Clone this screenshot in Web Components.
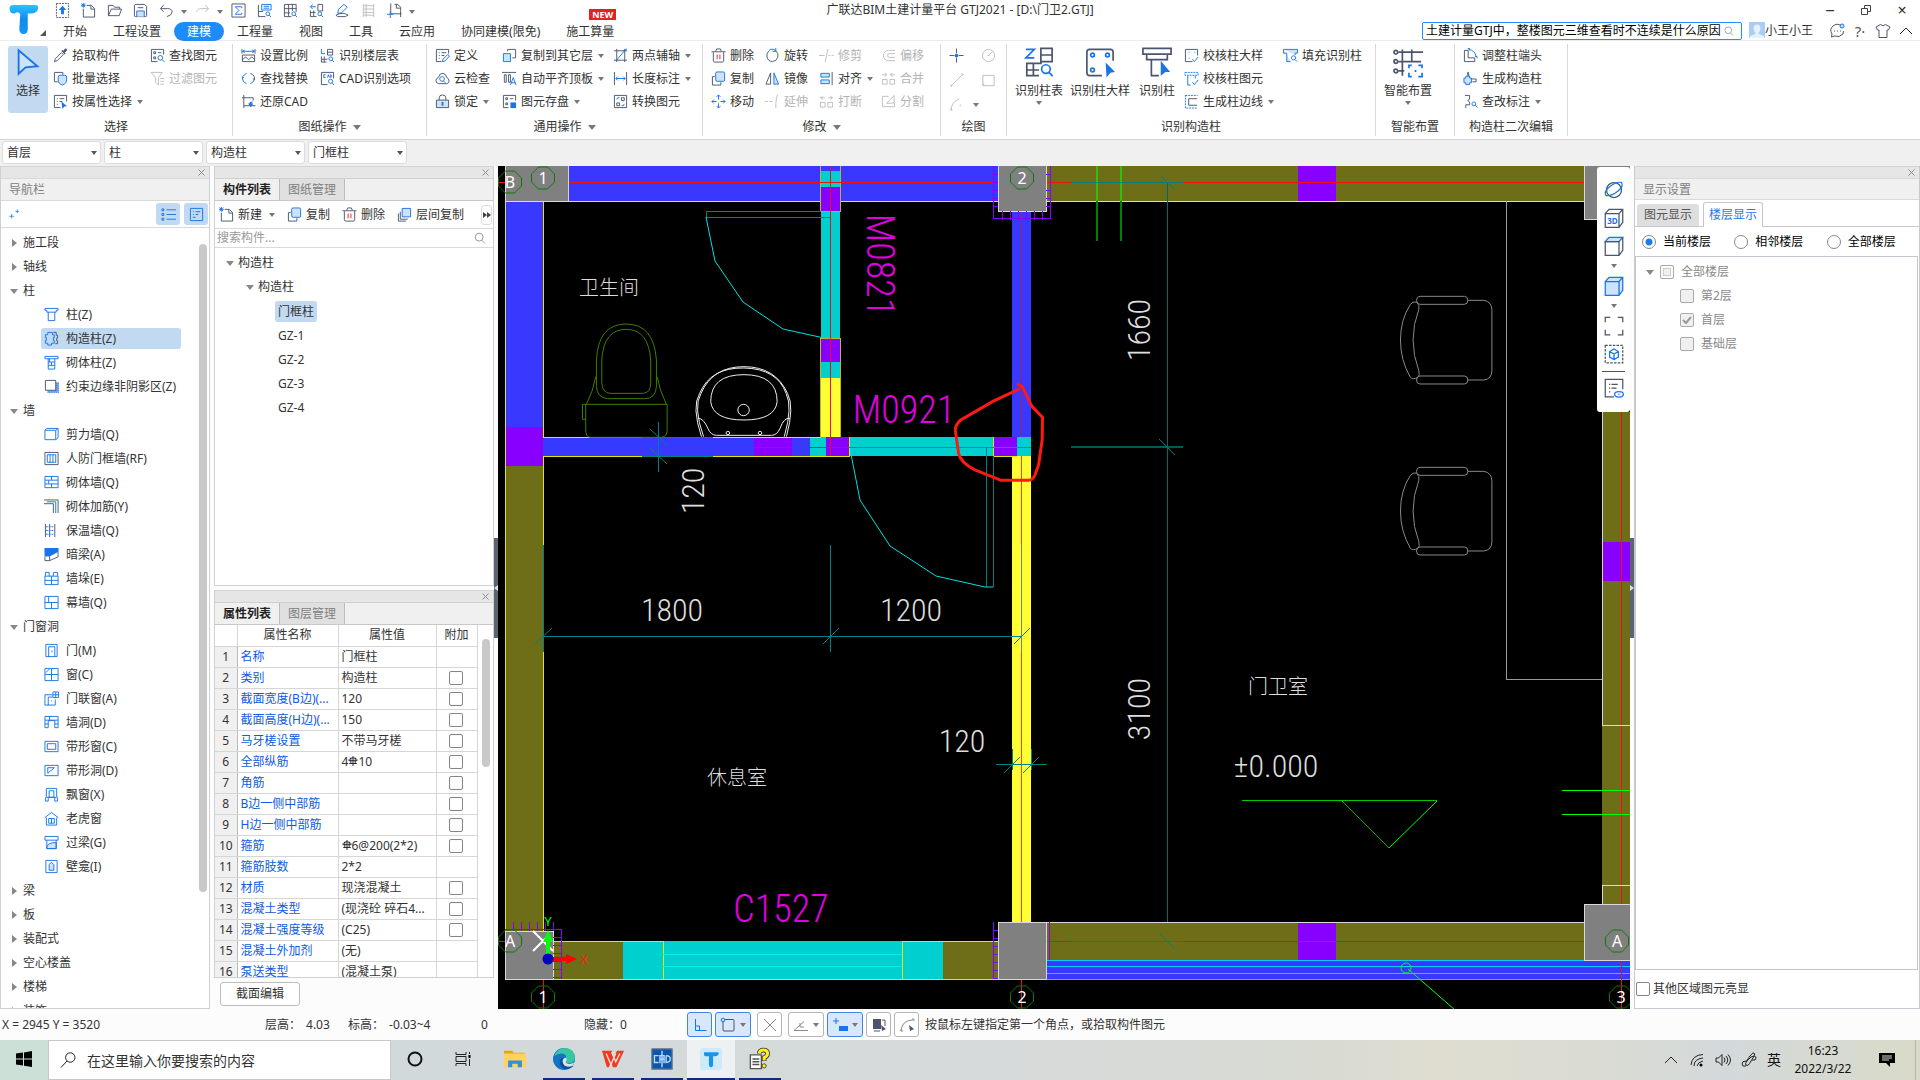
<!DOCTYPE html>
<html lang="zh-CN">
<head>
<meta charset="utf-8">
<title>广联达BIM土建计量平台 GTJ2021</title>
<style>
html,body{margin:0;height:100%}
body{font:12px/18px "Noto Sans","Noto Sans CJK SC",sans-serif;color:#333;background:#fcfcfc;overflow:hidden}
</style>
</head>
<body>
<gtj-app></gtj-app>
<script>
const BASE = `*{box-sizing:border-box}
button,input,select{font:inherit;color:inherit;margin:0}
button{background:none;border:0;padding:0;white-space:nowrap}
a{color:inherit;text-decoration:none}
input[type=checkbox]{appearance:none;width:14px;height:14px;border:1px solid #858585;border-radius:2px;background:#fff;display:block;flex:none}
.strip{height:12px;background:#e6e6e6;border-top:1px solid #d4d4d4;display:flex;justify-content:flex-end;align-items:center;padding-right:3px}
.strip button{width:9px;height:9px;display:block}.strip svg{display:block}
.caret{width:0;height:0;border:3px solid transparent;border-top:4px solid #777;border-bottom:0;flex:none}
`;
const STRIP = '<div class="strip"><button aria-label="关闭"><svg width="9" height="9" stroke="#8a8a8a" fill="none"><path d="M1.500 1.500l6 6m0-6l-6 6"/></svg></button></div>';
const define = (name, css, html, setup) => customElements.define(name, class extends HTMLElement {
  connectedCallback() {
    if (this.shadowRoot) return;
    const root = this.attachShadow({mode: 'open'});
    root.innerHTML = `<style>${BASE}${css}</style>` + (typeof html === 'function' ? html(this) : html);
    if (setup) setup(root, this);
  }
});

/* ---------- icons ---------- */
const p = (c, d) => `<path class="${c}" d="${d}"/>`;
const ICONS = {
  up: p('d dash', 'M1.500 .5h13v15h-13z') + p('B', 'M8 3l4 4.500H9.500V12h-3V7.500H4z'),
  newdoc: p('d', 'M6 2.500h5l3.500 3.500v9h-12V6M10.500 2.500V6.500h4') + p('b', 'M.5.500l4 4m0-4l-4 4M2.500 0v5M0 2.500h5'),
  open: p('d', 'M1.500 13.500v-11h5l1.500 2h5.500v2M1.500 13.500l3-7h11l-2.500 7z'),
  save: p('d', 'M1.500 3q0-1.500 1.500-1.500h9.500l2 2v10q0 1-1 1h-11q-1 0-1-1z') + p('bf', 'M4 14.500v-6h8v6') + p('d', 'M5 5h6'),
  undo: p('d', 'M5 2L1.500 6 5 9.500M2 6h7q5 0 5 3.500Q14 13 8.500 14.500'),
  redo: p('g', 'M11 2l3.500 4-3.500 3.500M14 6H7Q2 6 2 9.500'),
  sum: p('d', 'M1 1h14v14H1z') + p('b', 'M11.500 5.500V4h-7l4 4-4 4h7v-1.500'),
  kbd: p('b', 'M5 1.500h10v6H5zM7 3.500h6M7 5.500h6') + p('d', 'M1.500 2v12.500H9M1.500 9h5') + p('b', 'M13.500 11.500a2 2 0 1 1-4 0 2 2 0 0 1 4 0M13 13l2 2'),
  grid: p('d', 'M1.500 1.500h12.500v8M1.500 1.500V14.500H9M1.500 6h13M1.500 10.500h6M6 1.500v13M10 1.500v7') + p('b', 'M13.500 11.500a2 2 0 1 1-4 0 2 2 0 0 1 4 0M13 13l2 2'),
  plan: p('d', 'M9.500 1.500h5v7h-5zM1.500 8v6.500H8M5 8v6M1 10h6') + p('b', 'M1.500 4h6M4 1.500L1.500 4 4 6.500M13.500 11.500a2 2 0 1 1-4 0 2 2 0 0 1 4 0M13 13l2 2'),
  eraser: p('b', 'M9.500 1.500l3.500 3-6 6-4 .5.500-4z') + p('d', 'M1 13q7-4 13 0l-3 1.500H3z'),
  rail: p('g', 'M2.500 1v14M13.500 1v14M2.500 3h11M2.500 6.500h11M2.500 10h11M2.500 13h11M5.500 1v14'),
  crop: p('d', 'M4 .5v11h11.500M8 1.500h3.500l3 3V8M10 1.500v4h4.500M14.500 8v7') + p('b', 'M0 12h7M3.500 9v7'),
  arrow: p('bf', 'M3 1.500v12.500l3.700-3.400L13 10z'),
  pick: p('d', 'M1.500 14.500l1-3L9 5l2 2-6.500 6.500z') + p('D', 'M9 3l1-1 1 1 2-2.500q2-.5 2 2L12.500 5l1 1-1 1z'),
  multi: p('d', 'M5 11.500H1.500v-10h9V4') + p('bf', 'M5.500 6.500q0-2 2-2h5q2 0 2 2v3q0 4-4.500 5.500-4.500-1.500-4.500-5.500z'),
  prop: p('d', 'M14.500 8V1.500h-13v13H8M4 5h1M7 5h5M4 8h1M7 8h3M4 11h1') + p('B', 'M9 8l6 5-3 .3L10 16z'),
  find: p('d', 'M14.500 7V1.500h-13v13H8M4 4h2v2H4zM4 9.500h2v2H4zM8.500 5h3.500') + p('b', 'M13.500 10.500a2.500 2.500 0 1 1-5 0 2.500 2.500 0 0 1 5 0M13 12.500l2.500 2.500'),
  filter: p('g', 'M1 1.500h12L9 7v8L6 12V7zM11 8h4M11 11h4M11 14h4'),
  scale: p('b', 'M1 3.500h14M1 1v5M15 1v5M4 2L2 3.500 4 5M12 2l2 1.500L12 5') + p('d', 'M1.500 7.500h13v7h-13zM1.500 12.500L5 9.500l3 3 3.500-3 3 3'),
  swap: p('d', 'M10 2.500q5 2 4.500 7l-2-1.500') + p('b', 'M6 13.500q-5-2-4.500-7.500L3 7.500M6 2.500Q3 4 2 6M10 13.500q3-1 4-4'),
  restore: p('d', 'M3 1v11.500h12.500M1 4h12M13 4v3M3 15v-2.500') + p('B', 'M13 8q-4 0-4 2H7.500l3 4 2.500-4h-2z'),
  floors: p('b', 'M1.500 1v5h4') + p('d', 'M8 1.500h5.500v6H8zM8 4.500h5M1.500 9v6H7M4.500 9v6M1.500 12H8') + p('b', 'M13.500 11.500a2 2 0 1 1-4 0 2 2 0 0 1 4 0M13 13l2 2'),
  cad: p('d', 'M14.500 8V1.500h-13v13H8') + p('b', 'M6 4H4v3h2M8 7l1-3 1 3M11.500 4v3q2-1 0-3M13.500 11a2.200 2.200 0 1 1-4.400 0 2.200 2.200 0 0 1 4.400 0M13 13l2 2'),
  def: p('d', 'M14.500 6V1.500h-13v13H7M4 5h1M7 5h5M4 8h1M7 8h3M4 11h1') + p('b', 'M8 14.500l.5-2.500L13.500 7l2 1.500-5 5.500z'),
  cloud: p('d', 'M4 13.500Q.5 13 1 10q.5-2.500 2.500-3Q5 2 8.500 2.500 12 3 12.500 7 15 8 15 10.500 15 13 12.500 13.500z') + p('b', 'M10 8.500a2.500 2.500 0 1 1-5 0 2.500 2.500 0 0 1 5 0M9 10.500l2 2'),
  lock: p('d', 'M4.500 6.500V4q0-3 3.500-3t3.500 3v2.500') + '<path fill="#cfe2fb" stroke="#4b556b" d="M1.500 6.500h13v8h-13z"/>' + p('B', 'M7 8.500h2v4H7z'),
  copylay: p('d', 'M6 3.500V1.500h8.500v9H11') + p('bf', 'M1.500 6h5l2.500 0v8.500H1.500z'),
  align2: p('d', 'M0 1.500h15M2.500 4h2v8h-2zM7 4h2v8H7z') + p('b', 'M9 15l3-8 3 8M10 12.500h4'),
  disk: p('d', 'M14.500 7V1.500h-13v13H7M4 4h2v2H4zM4 9.500h2v2H4zM8.500 5h3.500') + p('B', 'M9 9h6v6H9z'),
  axis2: p('d', 'M4 1v14M12.500 1v14M1 3h14M1 13h14') + p('b', 'M3 14L13 2M11 2.500h3v-2'),
  dim: p('d', 'M1.500 1v14M14.500 1v14') + p('b', 'M3 8h10M5 6L3 8l2 2M11 6l2 2-2 2'),
  convert: p('d', 'M1.500 1.500h13v13h-13zM9 4h3v3H9zM4 9.500h3v3H4z') + p('b', 'M7 4H5l-1 2M9 12.500h2l1-2'),
  del: p('d', 'M2.500 4.500v9q0 1.500 1.500 1.500h8q1.500 0 1.500-1.500v-9M.5 4h15M5 3.500L6 1h4l1 2.500') + p('r', 'M6.500 7v5M9.500 7v5'),
  copy: p('d', 'M4 6H1.500v9h9v-3') + p('bf', 'M5 2.500q0-1.500 1.500-1.500H13q1.500 0 1.500 1.500v7q0 1.500-1.500 1.500H6.500Q5 11 5 9.500z'),
  move: p('b', 'M6 3l2-2 2 2M6 13l2 2 2-2M3 6L1 8l2 2M13 6l2 2-2 2M8 1v5M8 10v5M1 8h5M10 8h5'),
  rotate: p('d', 'M5 2.500a6.500 6.500 0 0 0 3 12M11.500 3a6.500 6.500 0 0 1-3.500 11.500') + p('b', 'M5 1.500q4-1 6.500 1.500M11.500 0v3.500H8'),
  mirror: p('d', 'M6 2v12H1z') + p('bf', 'M9.500 2v12h5z'),
  extend: p('g', 'M0 8h3M5 8h3M13.500 1q-2 3-2 14'),
  trim: p('g', 'M0 8h6M10 8h2M13.500 8h2M9.500 1l-3 14'),
  align: p('bf', 'M2 2.500h9v4H2zM2 9.500h9v4H2z') + p('d', 'M14 1v14'),
  brk: p('g', 'M1.500 9h5v5h-5zM9.500 9h5v5h-5zM1 4h5M10 4h5M4 2L2 4l2 2M12 2l2 2-2 2'),
  offset: p('g', 'M15 2.500H8a5.500 5.500 0 0 0 0 11h7M15 6H9a2 2 0 0 0 0 4h6'),
  merge: p('g', 'M1.500 9h5v5h-5zM9.500 9h5v5h-5zM1 4h5M10 4h5M4 2l2 2-2 2M12 2l-2 2 2 2'),
  split: p('g', 'M8 2.500H1.500v11h13V9M6 10L14 1.500v8z'),
  point: p('d', 'M8 .5v5M8 10.500v5M.5 8h5M10.500 8h5') + '<circle class="B" cx="8" cy="8" r="2"/>',
  circ: '<circle class="g" cx="8" cy="8" r="6.500"/>' + p('g', 'M8 8l4-4M7 8h2'),
  line: p('g', 'M2 14L14 2M1 13h2v2M13 1h2v2'),
  rect: p('g', 'M2 2.500h12v11H2zM1 12h2v2'),
  arc: p('g', 'M2 14Q3 5 11 2M1 13h2v2M12 8v2'),
  coltable: '<g stroke-width=".9">' + p('d', 'M9 .500h6v7H9zM9 4h6M1.500 8.500h8M1.500 8v7H8M5 8v7M1.500 12H8M9 8V4') + p('b', 'M1 1h4.500L1 5.500h4.500M14 11.500a2.300 2.300 0 1 1-4.600 0 2.300 2.300 0 0 1 4.600 0M13.300 13.300l2 2') + '</g>',
  colbig: '<g stroke-width=".9">' + p('d', 'M15 7V2.500Q15 1 13.500 1h-11Q1 1 1 2.500v11Q1 15 2.500 15H9') + p('b', 'M5 4a1 1 0 1 1-2 0 1 1 0 0 1 2 0M13 4a1 1 0 1 1-2 0 1 1 0 0 1 2 0M5 12a1 1 0 1 1-2 0 1 1 0 0 1 2 0') + p('B', 'M11 8l5 5-2.500.5L11.500 16z') + '</g>',
  colone: '<g stroke-width=".9">' + p('d', 'M.5.500h15v3h-2v3h-11v-3h-2zM3 3.500h10M5 6.500V15h4') + p('B', 'M10 7l5 6h-2.500L10 15z') + '</g>',
  chk1: p('d', 'M14.500 8V1.500h-13v13H9') + p('b', 'M5 4.500h1M11 4.500h1M5 11h1M9 12l2 2.500 4-5'),
  chk2: p('b dash', 'M1 1.500h14v3H1z') + p('b', 'M4 5v10h3M9 12l2 2.500 4-5M12 5v3'),
  edge: p('b dash', 'M1.500 1v14h13M1.500 1.500h13') + p('d', 'M14 5H5v7h9'),
  fillcol: p('bf', 'M.5 1.500h15v4H13v2M.5 1.500v4H4v9h4') + p('b', 'M13.500 10.500a2.200 2.200 0 1 1-4.400 0 2.200 2.200 0 0 1 4.400 0M13 12.500l2 2'),
  smart: '<g stroke-width=".9">' + p('d', 'M5 1v14M10 1v7M3 2.500h13M3 7.500h12M3 12.500h3M2.500 2.500a1 1 0 1 1-2 0 1 1 0 0 1 2 0M2.500 7.500a1 1 0 1 1-2 0 1 1 0 0 1 2 0M2.500 12.500a1 1 0 1 1-2 0 1 1 0 0 1 2 0') + p('b', 'M8.500 11v-1.500H10M13.500 9.500h2V11M15.500 13.500v2h-2M10 15.500H8.500v-2M12 12v1') + '</g>',
  endcol: p('d', 'M1.500 2.500v12h11v-4H5.500v-8z') + p('b', 'M6 1.500q7 1 8 8M5 .5h2v2M13 9h2v2'),
  gencol: p('bf', 'M3 5.500h4v2h2v5H7v2H3v-2H1v-5h2z') + p('d', 'M5 5V1.500l1 0v4M9 8.500h5v3h-4'),
  annot: p('d', 'M2 1.500h5v4L5 7l2 1.500v3H3v3.500') + p('b', 'M13.500 10.500a2 2 0 1 1-4 0 2 2 0 0 1 4 0M13 12l2.500 2.500'),
  list: p('b', 'M1 2h2v2H1zM1 7h2v2H1zM1 12h2v2H1zM6 3h10M6 8h10M6 13h10'),
  card: p('b', 'M1.500 1.500h13v13h-13zM4 5h1M7 5h5M4 8h1M7 8h3M4 11h3'),
  plus2: p('b', 'M3.500 8v6M.5 11h6M11 2v5M8.500 4.500h5'),
  lay: p('d', 'M3.500 5v8h8M1.500 7v8h8') + p('bf', 'M5.500 1.500h9v9h-9z'),
  mag: p('g2', 'M11.500 7a4.500 4.500 0 1 1-9 0 4.500 4.500 0 0 1 9 0M10 10.500l3.500 3.500'),
  c1: p('b', 'M1 1.500h14v2H13v2H3v-2H1zM4.500 5.500v9h7v-9'),
  c2: p('b', 'M4 1.500h5V4h2v3h-1v3h1v3H8v2H4v-2H1.500v-3h1V7h-1V4H4z') + p('d', 'M10 1.500h3v3h1.500v3h-1v3h1v3H12'),
  c3: p('b', 'M1 1.500h14v2.500H1zM4.500 4v11h7V4M4.500 7.500h7M4.500 11h7M8 7.500V11M6 4v3.500'),
  c4: '<path fill="#6aa5f0" stroke="#1874e8" stroke-dasharray="1 1" d="M4 14.500V12h9V4h2.500v10.500z"/><path fill="#fff" d="M1 1h11v11H1z"/>' + p('d', 'M1.500 1.500h11v10.500h-11z'),
  w1: p('b', 'M1 3.500h11.500v10H1zM1 3.500L3 1.500h12v10l-2.500 2M12.500 3.500l2.500-2'),
  w2: p('d', 'M1 1.500h14v13H1z') + p('b', 'M3.500 4h9v8h-9zM6.500 4v8M9.500 4v8'),
  w3: p('b', 'M1 1.500h14v12H1zM1 5.500h14M1 9.500h14M8 1.500v4M5 5.500v4M8 9.500v4'),
  w4: p('d', 'M0 1h15v14M0 5h10v10') + p('b', 'M3 3h9.500v12'),
  w5: p('d', 'M1.500 1v14M6 1v14M11.500 1v14') + p('b dash', 'M2 4h9M2 8h9M2 12h9'),
  w6: p('B', 'M.5 1h15v4L6 10H.5z') + p('d', 'M1 10.500v4h5l9-4V5.500M6 10v4.500'),
  w7: p('b', 'M1 5.500h14v9H1zM1 10h14M8 5.500v9M1.500 5.500v-4h4v4M10 5.500v-4h4.500v4'),
  w8: p('b', 'M1 1.500h14v13H1zM1 8h14M8 8v6.500M5 1.500V8M10 8'),
  o1: p('b', 'M2 1.500h12v13H2zM5 4v11M5 4h6.500v10.500M8.500 8v2'),
  o2: p('b', 'M1 1.500h14v13H1zM8 1.500v13M1 8h14M2 6l4-4'),
  o3: p('b', 'M9 4H1v11h11V9M4.500 6.500V15M4.500 6.500H9M9.500 1h6v6h-6zM12.500 1v6M9.500 4h6M8 10v1'),
  o4: p('b', 'M1 1.500h14v12h-3.500V6h-7v7.500H1zM1 5.500h14M6 1.500v4M1 9.500h3.500M11.500 9.500H15'),
  o5: p('b', 'M1 2.500h14v11H1zM3.500 5h9v6h-9z'),
  o6: p('b', 'M1 2.500h14v11H1zM4 11V5h7z'),
  o7: p('b', 'M2.500 1.500h11V11h-11zM5.500 4h5v7h-5zM1.500 11v4h3v-4M11.500 11v4h3v-4'),
  o8: p('b', 'M1 7l7-5.500L15 7M2.500 7v8h11V7M5 8h6v5H5zM8 8v5'),
  o9: p('bf', 'M3 12q2-4 10-4v6.500H3z') + p('b', 'M1 1.500h14v4H1zM3 5.500v9h10V5.500'),
  o10: p('b', 'M2 1.500h12v13H2z') + p('bf', 'M5.500 12V6L8 3.500 10.500 6v6z'),
  orbit: '<circle class="d" cx="8" cy="8" r="6"/>' + p('b', 'M1.500 12.500Q-.5 9 5 5t9-3q2 3-3 7t-9.500 3.500'),
  three: p('d', 'M1 4.500h11v11H1zM1 4.500L4 1h11v10.500l-3 4M12 4.500L15 1') + '<text x="2.500" y="12.500" font-size="6.500" font-weight="700" fill="#1677e6">3D</text>',
  cube: p('bf', 'M1 4.500L4 1h11l-3 3.500z') + p('d', 'M1 4.500h11v11H1zM15 1v10.500l-3 4'),
  cubef: p('bf', 'M1 4.500h11v11H1zM1 4.500L4 1h11v10.500l-3 4M12 4.500L15 1'),
  full: p('d', 'M1 5V1h4M11 1h4v4M15 11v4h-4M5 15H1v-4'),
  iso: p('d dash', 'M1 1h14v14H1z') + p('b', 'M8 4l3.500 2v4.500L8 12.500l-3.500-2V6zM4.500 6L8 8l3.500-2M8 8v4.500'),
  eye: p('d', 'M15 9V1H1v14h7M4 5h1M6 5h5M4 8h1M6 8h4M4 11h1') + '<ellipse class="b" cx="12" cy="13" rx="3.500" ry="2.200"/>' + p('b', 'M11.500 13h1'),
  s1: p('b', 'M3.500 2v11.500h11M3.500 9h4v4'), s2: p('d', 'M3 2.500h10q1 0 1 1V13q0 1-1 1H4q-1 0-1-1z') + '<circle class="bf" cx="3" cy="3" r="1.800"/>',
  s3: p('g2', 'M2 2l12 12M14 2L2 14'), s4: p('g2', 'M1 13.500h14M1 13.500l10-9M7 6v4h4'),
  s5: p('b', 'M1 4h6M4 1v6') + p('B', 'M7 9h9v5H7z'), s6: p('D', 'M2 2h8v10H2z') + p('d', 'M11 3h3v6M3 14h6') + p('D', 'M10 8l5 4-4 2z'),
  s7: p('g2', 'M2 14Q3 3 14 3M1 13h2v2M13 2h2v2') + p('D', 'M10 8l5 4-4 2z'),
  chat: p('d', 'M13 3Q8-.5 4 3t-1 8l-.5 3 3-1q5 2 8.500-2l.5-3M5 8h1M8 8h1M11 8h1') + '<circle class="bf" cx="13" cy="3" r="2"/>',
  shirt: p('d', 'M5.500 1.500Q8 4 10.500 1.500L15 4l-1.500 3H12v7.500H4V7H2.500L1 4z'),
  chev: p('k', 'M2 11l6-6 6 6'),
  avatar: '<path fill="#a9cdf3" d="M0 0h16v16H0z"/><path fill="#e4f1ff" d="M8 2.500q3.500 0 3.500 4Q11 10 9.500 11q.500 1.500 5.500 3v2H1v-2q5-1.500 5.500-3Q5 10 4.500 6.500 4.500 2.500 8 2.500"/>',
  bar: '<path fill="none" stroke="#222" stroke-width="1.500" d="M8 0v16M4.500 3v9M11.500 3v9M2 12h12M1.500 7.500Q1.500 3 8 3t6.500 4.500H1.500"/>',
  win: '<path d="M0 2.500L7 1.500V7.500H0zM8 1.400L16 0V7.500H8zM0 8.500H7V14.500L0 13.500zM8 8.500H16V16L8 14.700z"/>',
  tsearch: p('k', 'M15 5.500a4.700 4.700 0 1 1-9.400 0 4.700 4.700 0 0 1 9.400 0M7 9l-6 6.500'),
  ring: '<circle cx="8" cy="8" r="6.500" fill="none" stroke="#111" stroke-width="2"/>',
  tview: p('k', 'M1 1v2.500h10V1M1 5.500h10v5H1zM1 15v-2.500h10V15M14.500 1v2M14.500 8v7') + '<path d="M13.500 4h2v3h-2z"/>',
  folder: '<path fill="#e8a317" d="M0 2h6l1 1.500h8V6H0z"/><path fill="#ffd35c" d="M0 4h16v10H0z"/><path fill="#2f8fe0" d="M3 14V9h10v5h-3v-2.500H6V14z"/>',
  edgeb: '<circle cx="8" cy="8" r="8" fill="#1474c4"/><path fill="#37c7a0" d="M1 6Q3 0 9 0q7 1 7 7 0 4-5 4-3 0-2-2 2-5-3-5-3 0-5 2"/><path fill="#0c4f9e" d="M6 7q-3 5 2 8 4 1 7-2-7 1-8-3-.5-2 1-3z"/><path fill="#dbe4e6" d="M9.500 7q1 2-.5 3 1 2 4 1.500 2-.5 3-1.500l-2 3Q8 15 7 10q0-3 2.500-3"/>',
  wps: '<path fill="#f03a22" d="M0 2h7l1.500 4L11 2h5l-5.500 12H8L6.500 10 5 14H3.500z"/><path stroke="#ffe0d8" fill="none" d="M3 4l3.500 8L10 4M7 3l3 7 3-6"/>',
  cadapp: '<rect width="16" height="16" rx="1" fill="#7b8794"/><rect x="1" y="1" width="14" height="14" fill="#0c55a8"/><path fill="none" stroke="#b8dcff" d="M5.500 5.500H2.500v5h3M6.500 11V5.500h3V11M6.500 8h3M11 5.500v5q3 0 3-2.500t-3-2.500M8 2v12"/>',
  tlogo: '<defs><linearGradient id="t" x1="0" y1="0" x2="0" y2="1"><stop offset="0" stop-color="#2cc3ff"/><stop offset=".5" stop-color="#0d8cf0"/><stop offset="1" stop-color="#1497f5"/></linearGradient></defs><path fill="url(#t)" d="M.5 3.500Q-.5.500 2.500.500H6Q8 .3 10 .5h4q2 0 1.500 2-.5 2.500-4 2.500H10v8.500Q10 16 7.800 16T5.500 13.500L6 5.500Q5 3.500 3 5 1 5.500.5 3.500"/>',
  tapp: '<rect width="16" height="16" rx="2" fill="#cdeafb"/><path fill="#1596ee" d="M3 3h10q1 0 .5 1.500-.5 1.500-2.500 1.500H9.500v6q0 2-1.500 2t-1.500-2V6H4Q2.500 6 3 3"/>',
  help: '<path fill="#fff" stroke="#555" d="M1 5h8v10H1z"/><path stroke="#555" d="M2.500 8h5M2.500 10h5M2.500 12h5"/><path fill="none" stroke="#333" stroke-width="3.400" d="M7.500 4q0-2.500 3-2.500t3 2.500q0 2-2.500 3v2.500"/><path fill="none" stroke="#ffee22" stroke-width="2.200" d="M7.500 4q0-2.500 3-2.500t3 2.500q0 2-2.500 3v2"/><circle cx="11" cy="13" r="1.500" fill="#ffee22" stroke="#333" stroke-width=".6"/>',
  wifi: p('k', 'M2 13Q3 3 14 2.500M5 14q0-7 9-8M8 14q1-4 6-5') + '<circle cx="12" cy="13" r="1.500"/>',
  vol: p('k', 'M1 6h2.500L7 2.500v11L3.500 10H1zM9 5.500q2 2.500 0 5M11 4q3.500 4 0 8M13 2.500q5 5.500 0 11'),
  pen: p('k', 'M5 10q6-10 8-9t-3 8q-3 6-5 4t5-8q5-2 5 1t-4 2M5 9q-4 0-4 3t4 2'),
  note: '<path d="M0 1h16v10h-5v4l-4-4H0z"/><path stroke="#dcddd2" d="M3 4h10M3 6h10M3 8h7"/>',
};
define('ui-icon', `:host{display:inline-block;width:16px;height:16px;flex:none}
svg{display:block;width:100%;height:100%;overflow:visible}
.d{fill:none;stroke:#4b556b}.b{fill:none;stroke:#1874e8}.bf{fill:#cfe2fb;stroke:#1874e8}.B{fill:#1874e8}.D{fill:#4b556b}.g{fill:none;stroke:#bdbdbd}.g2{fill:none;stroke:#8c8c8c}.r{fill:none;stroke:#e02020}.k{fill:none;stroke:#222}.dash{stroke-dasharray:2 1}`,
  el => `<svg viewBox="0 0 16 16" aria-hidden="true">${ICONS[el.getAttribute('name')] || ''}</svg>`);
const ic = (n, cls = '') => `<ui-icon name="${n}" class="${cls}"></ui-icon>`;

/* ---------- header ---------- */
const tabs = ['开始','工程设置','建模','工程量','视图','工具','云应用','协同建模(限免)','施工算量'];
define('app-header', `:host{display:grid;grid-template-rows:20px 20px;background:#fff;border-bottom:1px solid #ececec;height:41px;flex:none}
.logo{grid-area:1/1/3/2;justify-self:start;width:48px;display:flex;padding:4px 0 0 8px}.logo ui-icon{width:32px;height:30px}
.logo i{align-self:end;border:3px solid transparent;border-right-color:#555;border-bottom-color:#555;width:0;height:0;margin:0 0 4px}
.top{grid-area:1/1;display:grid;grid-template-columns:1fr auto 1fr}
.qat{display:flex;padding-left:49px;align-items:center}.qat button{width:26px;height:20px;display:grid;place-items:center}.qat .caret{margin:4px 2px 0}
.qat ui-icon{width:15px;height:15px}
.title{line-height:20px}
.wc{display:flex;justify-content:flex-end;gap:6px;padding-right:3px}.wc button{width:30px;height:20px;font-size:16px;line-height:18px;display:grid;place-items:center}
.row{grid-area:2/1;display:flex;justify-content:space-between;align-items:flex-start;padding-top:2px}
nav{display:flex;padding-left:50px}nav a{position:relative;padding:0 13px;line-height:19px;white-space:nowrap}
nav a.on{background:#1e8cf8;color:#fff;border-radius:10px}
.new{position:absolute;top:-13px;right:11px;background:#e22222;color:#fff;font-size:9px;line-height:11px;padding:0 3px}
.right{display:flex;align-items:center}
.search{width:320px;height:18px;border:1px solid #1e90ff;border-radius:2px;display:flex;align-items:center;padding:0 6px 0 3px;color:#000;background:#fff}
.search input{border:0;outline:0;flex:1;padding:0;height:16px;min-width:0;background:none}.search ui-icon{width:12px;height:12px}
.user{display:flex;margin:0 16px 0 7px}
.act{display:flex;gap:7px;align-items:center;padding-right:6px}.act button{height:18px;display:grid;place-items:center;width:16px}.act .q{font-size:15px;color:#4b556b}`,
`<div class="top"><div class="qat">${['up','newdoc','open','save','undo'].map(n=>`<button aria-label="${n}">${ic(n)}</button>`).join('')}<i class="caret"></i><button aria-label="redo">${ic('redo')}</button><i class="caret"></i>${['sum','kbd','grid','plan','eraser','rail','crop'].map(n=>`<button aria-label="${n}">${ic(n)}</button>`).join('')}<i class="caret"></i></div>
<div class="title">广联达BIM土建计量平台 GTJ2021 - [D:\\门卫2.GTJ]</div>
<div class="wc"><button>‒</button><button aria-label="还原"><svg width="10" height="10" fill="none" stroke="#444"><path d="M.5 3.500h6v6h-6zM3.500 3V.5h6v6H7"/></svg></button><button>×</button></div></div>
<div class="row"><nav>${tabs.map((t,i)=>`<a href="#" class="${i==2?'on':''}">${t}${i==8?'<b class="new">NEW</b>':''}</a>`).join('')}</nav>
<div class="right"><label class="search"><input aria-label="搜索" value="土建计量GTJ中，整楼图元三维查看时不连续是什么原因">${ic('mag')}</label><div class="user">${ic('avatar')}<span>小王小王</span></div>
<div class="act"><button aria-label="消息">${ic('chat')}</button><button class="q">?·</button><button aria-label="皮肤">${ic('shirt')}</button><button aria-label="收起">${ic('chev')}</button></div></div></div>
<div class="logo">${ic('tlogo')}<i></i></div>`);

/* ---------- ribbon ---------- */
define('tool-item', `:host{display:block;height:23px}button{display:flex;align-items:center;height:23px;padding-right:5px}
:host([caret]) button{padding-right:2px}ui-icon{width:15px;height:15px;margin-right:4px}.caret{margin-left:5px}:host([off]){color:#b4b4b4}`,
  el => `<button>${ic(el.getAttribute('icon'))}<slot></slot>${el.hasAttribute('caret')?'<i class="caret"></i>':''}</button>`);
define('tool-big', `:host{display:block}button{display:flex;flex-direction:column;align-items:center;height:67px;width:100%;border-radius:3px}
ui-icon{width:30px;height:31px;margin:1px 0 4px}:host([on]) button{background:#c2d9f2}.caret{margin-top:1px}`,
  el => `<button>${ic(el.getAttribute('icon'))}<slot></slot>${el.hasAttribute('caret')?'<i class="caret"></i>':''}</button>`);
define('ribbon-group', `:host{display:flex;flex-direction:column;border-right:1px solid #d9d9d9;height:92px;flex:none}
.body{display:flex;height:74px;padding:0 8px;gap:var(--gap,7px)}
.label{display:flex;justify-content:center;align-items:center;gap:6px;line-height:18px}.label .caret{border-width:4px;border-top-width:5px;border-bottom:0}`,
  el => `<div class="body"><slot></slot></div><div class="label">${el.getAttribute('label')}${el.hasAttribute('caret')?'<i class="caret"></i>':''}</div>`);
const T = (icon, text, flags='') => `<tool-item icon="${icon}" ${flags}>${text}</tool-item>`;
const col = (...a) => `<div class="col">${a.join('')}</div>`;
define('ribbon-bar', `:host{display:flex;background:#fff;height:99px;padding-top:3px;border-bottom:1px solid #d4d4d4;flex:none}
.b40{width:40px;margin-top:2px}.b60{width:60px;margin-top:2px}.b48{width:48px;margin-top:2px}.pen{display:grid;grid-template-columns:32px 20px}`,
`<ribbon-group label="选择" style="width:233px;--gap:5px"><tool-big class="b40" icon="arrow" on>选择</tool-big>${col(T('pick','拾取构件'),T('multi','批量选择'),T('prop','按属性选择','caret'))}${col(T('find','查找图元'),T('filter','过滤图元','off'))}</ribbon-group>
<ribbon-group label="图纸操作" caret style="width:194px">${col(T('scale','设置比例'),T('swap','查找替换'),T('restore','还原CAD'))}${col(T('floors','识别楼层表'),T('cad','CAD识别选项'))}</ribbon-group>
<ribbon-group label="通用操作" caret style="width:276px">${col(T('def','定义'),T('cloud','云检查'),T('lock','锁定','caret'))}${col(T('copylay','复制到其它层','caret'),T('align2','自动平齐顶板','caret'),T('disk','图元存盘','caret'))}${col(T('axis2','两点辅轴','caret'),T('dim','长度标注','caret'),T('convert','转换图元'))}</ribbon-group>
<ribbon-group label="修改" caret style="width:238px;--gap:6px">${col(T('del','删除'),T('copy','复制'),T('move','移动'))}${col(T('rotate','旋转'),T('mirror','镜像'),T('extend','延伸','off'))}${col(T('trim','修剪','off'),T('align','对齐','caret'),T('brk','打断','off'))}${col(T('offset','偏移','off'),T('merge','合并','off'),T('split','分割','off'))}</ribbon-group>
<ribbon-group label="绘图" style="width:66px"><div class="pen">${T('point','')}${T('circ','')}${T('line','')}${T('rect','')}${T('arc','','caret')}</div></ribbon-group>
<ribbon-group label="识别构造柱" style="width:369px;--gap:7px"><tool-big class="b48" icon="coltable" caret>识别柱表</tool-big><tool-big class="b60" icon="colbig">识别柱大样</tool-big><tool-big class="b40" icon="colone">识别柱</tool-big>${col(T('chk1','校核柱大样'),T('chk2','校核柱图元'),T('edge','生成柱边线','caret'))}${col(T('fillcol','填充识别柱'))}</ribbon-group>
<ribbon-group label="智能布置" style="width:79px"><tool-big class="b48" icon="smart" caret>智能布置</tool-big></ribbon-group>
<ribbon-group label="构造柱二次编辑" style="width:113px">${col(T('endcol','调整柱端头'),T('gencol','生成构造柱'),T('annot','查改标注','caret'))}</ribbon-group>`);
define('context-bar', `:host{display:flex;gap:3px;padding:1px 2px;height:26px;background:#f0f0f0;flex:none}
select{appearance:none;width:99px;height:23px;border:1px solid #dcdcdc;border-radius:3px;padding:0 4px;background:#fff url("data:image/svg+xml,%3Csvg xmlns='http://www.w3.org/2000/svg' width='6' height='4'%3E%3Cpath fill='%23555' d='M0 0h6L3 4z'/%3E%3C/svg%3E") 88px 9px no-repeat}`,
['首层','柱','构造柱','门框柱'].map((t,i)=>`<select aria-label="${['楼层','构件分类','构件类型','构件'][i]}"><option>${t}</option></select>`).join(''));

/* ---------- left navigation ---------- */
const nav = [['>施工段'],['>轴线'],['v柱'],['柱(Z)','c1'],['构造柱(Z)','c2',1],['砌体柱(Z)','c3'],['约束边缘非阴影区(Z)','c4'],['v墙'],['剪力墙(Q)','w1'],['人防门框墙(RF)','w2'],['砌体墙(Q)','w3'],['砌体加筋(Y)','w4'],['保温墙(Q)','w5'],['暗梁(A)','w6'],['墙垛(E)','w7'],['幕墙(Q)','w8'],['v门窗洞'],['门(M)','o1'],['窗(C)','o2'],['门联窗(A)','o3'],['墙洞(D)','o4'],['带形窗(C)','o5'],['带形洞(D)','o6'],['飘窗(X)','o7'],['老虎窗','o8'],['过梁(G)','o9'],['壁龛(I)','o10'],['>梁'],['>板'],['>装配式'],['>空心楼盖'],['>楼梯'],['>装饰']];
const ARROW = `.ar{width:0;height:0;border:4px solid transparent;border-left:5px solid #888;border-right:0;flex:none;margin:0 6px 0 2px}.ar.v{border:4px solid transparent;border-top:5px solid #888;border-bottom:0;margin:0 5px 0 0}`;
define('nav-panel', ARROW + `:host{display:flex;flex-direction:column;background:#fff;border:1px solid #d0d0d0;border-top:0;min-height:0}
.title{height:22px;line-height:21px;background:#f0f0f0;border-top:1px solid #dadada;padding-left:8px;color:#808080}
.tools{height:28px;border:solid #dadada;border-width:1px 0;display:flex;align-items:center;padding:0 1px 0 8px;gap:4px}
.tools button{width:24px;height:22px;border-radius:3px;background:#c2d9f2;display:grid;place-items:center}.tools>ui-icon{margin-right:auto;width:12px;height:12px}.tools button ui-icon{width:15px;height:15px}
.wrap{flex:1;min-height:0;display:flex;padding-top:3px}
.tree{flex:1;overflow:hidden;display:flex;flex-direction:column}.tree>*{flex:none}.g{display:flex;height:24px;align-items:center;padding-left:9px;line-height:24px}
.i{display:flex;align-items:center;height:21px;margin:1px 0 2px 40px;width:140px;padding-left:3px;border-radius:3px;white-space:nowrap}.i.on{background:#c2d9f2}.i ui-icon{width:15px;height:15px;margin-right:7px}
.bar{width:8px;height:648px;margin:13px 2px 0 0;border-radius:4px;background:#c9c9c9}`,
`${STRIP}<div class="title">导航栏</div><div class="tools">${ic('plus2')}<button aria-label="列表">${ic('list')}</button><button aria-label="卡片">${ic('card')}</button></div>
<div class="wrap"><div class="tree">${nav.map(([t,i,on])=>i?`<div class="i ${on?'on':''}">${ic(i)}${t}</div>`:`<div class="g"><i class="ar ${t[0]=='v'?'v':''}"></i>${t.slice(1)}</div>`).join('')}</div><div class="bar"></div></div>`);

const TABS = `.tabs{display:flex;height:23px;background:#f0f0f0;border-bottom:1px solid #c8c8c8;border-top:1px solid #d0d0d0}.tabs button{width:65px;border-right:1px solid #bbb;line-height:20px;color:#808080;background:#e0e0e0}.tabs .on{font-weight:700;color:#222;background:#f0f0f0}`;
define('component-panel', ARROW + TABS + `:host{display:flex;flex-direction:column;background:#fff;border:1px solid #d0d0d0;border-top:0;height:420px;flex:none}
.tools{display:flex;align-items:center;height:27px;padding:0 1px 0 4px;gap:12px}.tools button{display:flex;align-items:center;gap:4px}.tools ui-icon{width:15px;height:15px}.tools .caret{margin-left:3px}.tools .more{margin-left:auto;border:1px solid #ddd;border-radius:3px;height:20px;width:11px;justify-content:center;gap:0}
.s{display:flex;height:20px;border:solid #dadada;border-width:1px 0;align-items:center;padding:0 6px 0 2px}.s input{border:0;padding:0;flex:1;outline:0;height:18px}.s input::placeholder{color:#999;opacity:1}.s ui-icon{width:14px;height:14px}
.t{padding-top:3px}.t div{display:flex;height:24px;align-items:center}.l0{padding-left:11px}.l1{padding-left:31px}.l2{padding-left:60px}.l2 span{padding:0 3px;line-height:21px;border-radius:3px}.l2 .on{background:#c2d9f2}.ar.v{margin-right:4px}`,
`${STRIP}<div class="tabs"><button class="on">构件列表</button><button>图纸管理</button></div>
<div class="tools"><button>${ic('newdoc')}新建<i class="caret"></i></button><button>${ic('copy')}复制</button><button>${ic('del')}删除</button><button>${ic('lay')}层间复制</button><button class="more" aria-label="更多"><svg width="8" height="6" fill="#444"><path d="M0 0l4 3-4 3zM4 0l4 3-4 3z"/></svg></button></div>
<div class="s"><input aria-label="搜索构件" placeholder="搜索构件...">${ic('mag')}</div>
<div class="t"><div class="l0"><i class="ar v"></i>构造柱</div><div class="l1"><i class="ar v"></i>构造柱</div><div class="l2"><span class="on">门框柱</span></div>${[1,2,3,4].map(n=>`<div class="l2"><span>GZ-${n}</span></div>`).join('')}</div>`);

const B = ic('bar','rb');
const rows = [['名称','门框柱',0],['类别','构造柱',1],['截面宽度(B边)(...','120',1],['截面高度(H边)(...','150',1],['马牙槎设置','不带马牙槎',1],['全部纵筋',`4${B}10`,1],['角筋','',1],['B边一侧中部筋','',1],['H边一侧中部筋','',1],['箍筋',`${B}6@200(2*2)`,1],['箍筋肢数','2*2',0],['材质','现浇混凝土',1],['混凝土类型','(现浇砼 碎石4...',1],['混凝土强度等级','(C25)',1],['混凝土外加剂','(无)',0],['泵送类型','(混凝土泵)',0]];
define('property-panel', TABS + `:host{display:flex;flex-direction:column;flex:1;min-height:0}
.box{flex:1;min-height:0;border:1px solid #d0d0d0;border-top:0;overflow:hidden;background:#fff;display:flex;flex-direction:column}
.strip,.tabs{flex:none}
.w{display:flex;flex:1;min-height:0;overflow:hidden;align-items:flex-start}
table{border-collapse:collapse;table-layout:fixed;width:262px;flex:none}td,th{border:1px solid #d6d6d6;border-width:0 1px 1px 0;height:21px;padding:0 0 0 3px;line-height:18px;white-space:nowrap;overflow:hidden;font-weight:400}
th{padding:0;text-align:center}td:first-child{background:#f0f0f0;text-align:center;padding:0;border-right-color:#bbb}td:nth-child(2){color:#0f5be0}td:last-child{padding-left:12px}.rb{width:10px;height:10px}
.bar{width:8px;height:128px;margin:14px 0 0 4px;border-radius:4px;background:#c9c9c9}
.foot{height:31px;padding:4px 0 0 6px}.foot button{width:80px;height:24px;border:1px solid #bdbdbd;border-radius:3px;background:#fff}`,
`<div class="box">${STRIP}<div class="tabs"><button class="on">属性列表</button><button>图层管理</button></div>
<div class="w"><table><colgroup><col style="width:22px"><col style="width:101px"><col style="width:98px"><col style="width:41px"></colgroup><tr><th></th><th>属性名称</th><th>属性值</th><th>附加</th></tr>
${rows.map(([a,b,c],i)=>`<tr><td>${i+1}</td><td>${a}</td><td>${b}</td><td>${c?`<input type="checkbox" aria-label="${i+1} 附加">`:''}</td></tr>`).join('')}</table><div class="bar"></div></div></div>
<div class="foot"><button>截面编辑</button></div>`);

/* ---------- plan drawing ---------- */
const R = (x1,y1,x2,y2,f,s='') => `<rect x="${x1}" y="${y1}" width="${x2-x1}" height="${y2-y1}" fill="${f}" ${s?`stroke="${s}"`:''}/>`;
const L = (c,d,w=1) => `<path d="${d}" stroke="${c}" stroke-width="${w}" fill="none"/>`;
const BL='#3838ff', OL='#6e6e18', PU='#8800ff', CY='#00cfcf', YE='#ffff33', GR='#808080', TE='#008080', YL='#e6e600', RD='#f01010', WH='#d8d8d8';
const bubble = (x,y,t) => `<path d="M${x-4.500} ${y-11}h9l7 7v8l-7 7h-9l-7-7v-8z" fill="none" stroke="#0a7a0a"/><text x="${x}" y="${y+6}" class="bub">${t}</text>`;
const chair = `<path d="M984 421q0-12 9-12h116q9 0 9 12t-9 12H993q-9 0-9-12M984 660q0-12 9-12h116q9 0 9 12t-9 12H993q-9 0-9-12M1118 421h42q21 4 21 30v180q0 26-21 29h-42M984 426q-10-2-16 7-26 46-26 107t26 112q6 8 20 0 5-5 2-20-15-45-15-92t15-92q3-12-6-22"/>`;
const hatch = (x1,x2,y) => { let d=''; for(let x=x1;x<=x2;x+=8) d+=`M${x} ${y}v9`; return d; };
const vh = (x,y1,y2) => { let d=''; for(let y=y1;y<=y2;y+=8) d+=`M${x} ${y}h8`; return d; };
define('plan-canvas', `:host{display:block;background:#000;min-width:0;position:relative;overflow:hidden}
svg{display:block;width:100%;height:100%}.sharp{shape-rendering:crispEdges}.free path,.free circle,.free ellipse{vector-effect:non-scaling-stroke;fill:none}
.n{font:300 32px "Roboto Condensed","Liberation Sans Narrow","Roboto","Noto Sans";fill:#ddd;text-anchor:middle}.m{fill:#e000e0;font-size:38px}.c{font:300 20px/1 "Noto Sans CJK SC";fill:#ddd;text-anchor:middle}.bub{font:16px "Noto Sans";fill:#fff;text-anchor:middle}
view-tools{position:absolute;top:1px;right:0}`,
`<svg viewBox="498 166 1132 843" preserveAspectRatio="xMidYMid slice" role="img" aria-label="首层平面图"><g class="sharp">
${R(568,166,998,201,BL)}${R(505,201,543,427,BL)}${R(505,427,543,466,PU)}${R(505,466,543,931,OL)}
${L(WH,'M568 201.500H998')}${L(YL,'M505.500 201V931M543.500 201V545M543.500 652V931')}${L(TE,'M543.500 545V652')}
${R(821,166,840,171,BL)}${R(821,171,840,187,CY)}${R(821,187,840,211,PU)}${R(821,211,840,338,CY)}${R(821,338,840,362,PU)}${R(821,362,840,378,CY)}${R(821,378,840,437,YE)}
${L('#b8b820','M820.500 166V211.500H840.500V166M820.500 437V338.500H840.500V437')}
${R(1046,166,1584,201,OL)}${R(1298,166,1336,201,PU)}${L(WH,'M1046 201.500H1584')}
${R(1012,211,1031,437,BL)}${R(1012,456,1031,922,YE)}
${R(543,437,754,456,BL)}${R(754,437,792,456,PU)}${R(792,437,810,456,BL)}${R(810,437,826,456,CY)}${R(826,437,849,456,PU)}${R(849,437,993,456,CY)}${R(993,437,1017,456,PU)}${R(1017,437,1031,456,CY)}
${L(YL,'M543 437.500H642M713 437.500H821M543 456.500H642M713 456.500H849.500V437M993.500 437V456.500H1017')}${L(TE,'M642 437.500H713M642 456.500H713')}
${L(RD,'M498 182.500H505M568 182.500H998M1046 182.500H1584M830.500 166V456')}${L('#a02060','M543 447.500H849M1021.500 211V437')}${L('#806060','M849 447.500H1031')}${L('#ff4020','M1021.500 456V545M1021.500 652V922')}${L('#6a8a80','M1021.500 545V652')}
${R(505.500,160,568.500,201.500,GR,WH)}${R(998.500,160,1046.500,211.500,GR,WH)}${R(1584.500,160,1640,219.500,GR,WH)}
${L(PU,'M993.500 166V218.500H1050.500V166'+hatch(1002,1046,211)+'M993 174h5M993 182h5M993 190h5M993 198h5M993 206h5M1046 174h5M1046 190h5M1046 198h5M1046 206h5')}
${L('#30c010','M1097 166V201M1121 166V201',2)}${L('#008000','M1097 201V241M1121 201V241',2)}
${L('#005a5a','M1071 447H1183',2)}${L('#006b6b','M1167 182V941',1)}${L(TE,'M1071 182.500H1183')}
${L('#9a9a9a','M1506.500 201V679.500H1602')}
${R(1602,412,1630,542,OL)}${R(1602,542,1630,581,PU)}${R(1602,581,1630,904,OL)}${L(RD,'M1621.500 412V904')}${L(WH,'M1602.500 412V725.500H1630M1630 885.500H1602.500V904')}
${L('#00ff00','M1562 790.500H1630M1562 814.500H1630')}${L('#00c800','M1242 800.500H1437')}
${R(1046,922,1584,960,OL)}${R(1298,922,1336,960,PU)}${R(1046,960,1630,979,BL)}${L(WH,'M1046 922.500H1584')}${L('#00d0ff','M1046 960.500H1630M1046 966.500H1630M1046 973.500H1630M1046 979.500H1630')}
${L(RD,'M1046 941.500H1584M1621.500 960V1009M543.500 979V1009M1021.500 979V1009M498 941.500H505')}${L(TE,'M1071 941.500H1183')}
${R(553,941,623,979,OL)}${R(623,941,943,979,CY)}${R(943,941,998,979,OL)}${L(YL,'M553 941.500H663M902 941.500H998M543 979.500H998M663.500 941V979M902.500 941V979')}${L('#00f0f0','M663 954.500H902M663 966.500H902')}
${R(505.500,931.500,553.500,979.500,GR,WH)}${R(998.500,922.500,1046.500,979.500,GR,WH)}${R(1584.500,904.500,1640,960.500,GR,WH)}
${L(PU,'M505 929.500H561.500V979'+hatch(513,560,922)+vh(553,937,977)+'M993.500 922V979M993 930h5M993 938h5M993 946h5M993 954h5M993 962h5M993 970h5M993 978h5M1049.500 922V960')}
${L(TE,'M543 636.500H1021M830.500 545V652M658.500 422V472M996 764.500H1047M1012.500 749V770M1031.500 749V770')}
${L(TE,'M706 211.500H821M706 217.500H830M706.500 211V217M986.500 447V587M993.500 456V587')}
</g>
${L(TE,'M535 644L552 628M823 644L839 628M1014 644L1030 628M1004 773L1020 757M1023 773L1039 757M650 429L667 445M650 448L667 464M1159 174L1175 190M1159 439L1175 455M1159 933L1175 949')}
${L('#00e0e0','M706 217L715 261 743 302 783 329 824 338M850 449L860 500 890 546 936 576 985 587H993')}
${L('#00b000','M1342 801L1389 848')}${L('#00ff00','M1389 848L1437 801M1408 969L1455 1010')}<circle cx="1406" cy="968" r="5" fill="none" stroke="#00ff00"/>
<g class="free" transform="translate(500 160) scale(.357143 .333333)">
<g stroke="#3f7d00"><path d="M270 660V600Q275 492 353 492T438 600V680Q436 716 405 716H302Q272 714 270 680zM285 668V600Q290 508 353 508T422 600V668Q422 700 400 700H308Q286 698 285 668zM268 650Q262 690 242 733M440 650Q446 690 466 733M240 733H468V810Q468 830 452 832H252Q240 830 240 810zM240 733H231V778H240"/></g>
<g stroke="#eee"><path d="M570 830Q540 740 563 700 595 620 683 620T805 700Q825 740 802 830M564 830Q536 740 559 700 590 622 683 624T801 700Q820 740 796 830M590 725Q590 644 683 644T776 725Q770 780 683 780T590 725M555 775Q570 775 582 805 590 826 606 826H760Q776 826 784 805 795 772 812 775"/><ellipse cx="682" cy="750" rx="16" ry="17"/><circle cx="638" cy="819" r="5"/><circle cx="728" cy="819" r="5"/></g>
<path stroke="#ff1a10" stroke-width="3" stroke-linecap="round" d="M1451 674L1462 680 1490 740 1519 772 1518 840 1508 915 1498 945Q1492 960 1480 961H1403L1330 930Q1290 908 1284 880L1275 812Q1274 795 1290 780L1380 724 1452 688"/></g>
<g class="free" stroke="#888" transform="translate(1040 160) scale(.38265 .333333)">${chair}<g transform="translate(0 513)">${chair}</g></g>
<text class="n" x="672" y="621">1800</text><text class="n" x="911" y="621">1200</text><text class="n" x="962" y="752">120</text>
<text class="n" transform="translate(704 491) rotate(-90)">120</text><text class="n" transform="translate(1150 330) rotate(-90)">1660</text><text class="n" transform="translate(1150 709) rotate(-90)">3100</text>
<text class="n m" x="904" y="423">M0921</text><text class="n m" x="781" y="922">C1527</text><text class="n m" transform="translate(867 265) rotate(90)">M0821</text>
<text class="n" x="1276" y="777">±0.000</text>
<text class="c" x="609" y="295">卫生间</text><text class="c" x="737" y="785">休息室</text><text class="c" x="1278" y="694">门卫室</text>
${bubble(510,182,'B')}${bubble(543,178,'1')}${bubble(1022,178,'2')}${bubble(510,941,'A')}${bubble(543,997,'1')}${bubble(1022,997,'2')}${bubble(1617,941,'A')}${bubble(1621,997,'3')}
${L('#fff','M533 931L553 951M533 951L547 937',2)}${L('#00ff00','M548 959V938',4)}<path fill="#00ff00" d="M543 942L548 930 553 942z"/>${L('#ff0000','M548 959H568',4)}<path fill="#ff0000" d="M566 954L577 959 566 964z"/><circle cx="548" cy="959" r="5.500" fill="#0000c0"/>
<text x="548" y="926" font-size="13" fill="#00ff00" text-anchor="middle">Y</text><text x="584" y="964" font-size="13" fill="#ff2010" text-anchor="middle">X</text>
</svg><view-tools></view-tools>`);
define('view-tools', `:host{display:flex;flex-direction:column;align-items:center;width:33px;height:245px;background:#fff;border-radius:3px;padding-top:13px}
button{display:block;margin-bottom:8px;height:20px}ui-icon{display:block;width:20px;height:20px}.caret{margin-bottom:8px}hr{width:23px;border:0;border-top:1px solid #555;margin:-1px 0 6px}`,
`${['orbit','three','cube'].map(n=>`<button aria-label="${n}">${ic(n)}</button>`).join('')}<i class="caret"></i><button aria-label="着色">${ic('cubef')}</button><i class="caret"></i><button aria-label="全屏">${ic('full')}</button><button aria-label="隔离">${ic('iso')}</button><hr><button aria-label="显示">${ic('eye')}</button>`);
define('side-splitter', `:host{display:flex;align-items:flex-start;padding-top:372px}div{width:4px;height:100px;background:#5b6472;display:grid;place-items:center}`, el=>`<div><svg width="4" height="6" fill="#ddd"><path d="${el.getAttribute('side')=='left'?'M4 0L0 3l4 3z':'M0 0l4 3-4 3z'}"/></svg></div>`);

/* ---------- display settings ---------- */
define('display-panel', ARROW + `:host{display:flex;flex-direction:column;background:#fff;border:1px solid #c8cacf;border-top:0;min-height:0}
.title{height:22px;line-height:21px;background:#f0f0f0;border:solid #dadada;border-width:1px 0;padding-left:8px;color:#808080}
.tabs{display:flex;height:27px;align-items:flex-end;gap:4px;padding-left:2px;border-bottom:1px solid #c4c7cf}.tabs button{width:62px;height:22px;background:#dedede;border-radius:3px 3px 0 0;color:#555}.tabs .on{width:60px;height:25px;margin-bottom:-1px;background:#fff;color:#1f7be6;border:1px solid #c4c7cf;border-bottom:0}
.r{display:flex;height:29px;align-items:center;padding-left:7px;color:#000}.r label{display:flex;align-items:center;gap:7px;width:93px}.r input{appearance:none;width:14px;height:14px;border:1px solid #888;border-radius:50%;background:#fff}.r input:checked{background:radial-gradient(#1f7be6 3px,#fff 4px)}
.tree{flex:1;border:1px solid #c4c7cf;padding-top:3px;color:#8a8a8a;margin-right:1px}.tree div{display:flex;align-items:center;height:24px;padding-left:44px}.tree div.root{padding-left:10px}.tree label{display:flex;gap:7px;align-items:center}.tree input{background:#f0f0f0;border-color:#aaa}.root .ar.v{margin-right:6px}.root input{box-shadow:inset 0 0 0 2px #fff,inset 0 0 0 3px #ccc}
.tree input:checked{background:#f0f0f0 url("data:image/svg+xml,%3Csvg xmlns='http://www.w3.org/2000/svg' width='12' height='12'%3E%3Cpath fill='none' stroke='%23999' stroke-width='2' d='M2 6l3 3 5-6'/%3E%3C/svg%3E") no-repeat}
.foot{height:38px;display:flex;align-items:center;padding-left:1px}.foot label{display:flex;gap:3px;align-items:center}`,
`${STRIP}<div class="title">显示设置</div><div class="tabs"><button>图元显示</button><button class="on">楼层显示</button></div>
<div class="r"><label><input type="radio" name="f" checked>当前楼层</label><label><input type="radio" name="f">相邻楼层</label><label><input type="radio" name="f">全部楼层</label></div>
<div class="tree"><div class="root"><i class="ar v"></i><label><input type="checkbox" disabled>全部楼层</label></div><div><label><input type="checkbox" disabled>第2层</label></div><div><label><input type="checkbox" disabled checked>首层</label></div><div><label><input type="checkbox" disabled>基础层</label></div></div>
<div class="foot"><label><input type="checkbox">其他区域图元亮显</label></div>`);

/* ---------- status bar and taskbar ---------- */
define('status-bar', `:host{display:flex;align-items:center;height:31px;background:#fcfcfc;padding-left:2px;flex:none;white-space:nowrap}
.xy{width:263px}.h{width:83px}.e{width:133px}.z{width:103px}.hid{width:103px}span b{font-weight:400;margin-left:5px}
button{display:flex;align-items:center;justify-content:center;height:25px;width:25px;border:1px solid #b5b5b5;border-radius:3px;margin-right:3px;background:#fff}button.w{width:36px;gap:4px}button.on{background:#d9e7fb;border-color:#3d87e8}button.sp{margin-right:6px}`,
`<span class="xy">X = 2945 Y = 3520</span><span class="h">层高：<b>4.03</b></span><span class="e">标高：<b>-0.03~4</b></span><span class="z">0</span><span class="hid">隐藏：0</span>
${[['s1','on'],['s2','on w sp'],['s3','sp'],['s4','w'],['s5','on w'],['s6',''],['s7','sp']].map(([n,c])=>`<button class="${c}" aria-label="${n}">${ic(n)}${c.includes('w')?'<i class="caret"></i>':''}</button>`).join('')}<span>按鼠标左键指定第一个角点，或拾取构件图元</span>`);
define('task-bar', `:host{display:flex;height:40px;flex:none;background:linear-gradient(90deg,#cce0d6,#d2d9da 20%,#d6dadb 50%,#d8dad3 68%,#deddd0 75%,#dadbd3 83%,#d3d9da 90%,#d9dac8)}
button{width:48px;height:40px;display:grid;place-items:center;border-bottom:2px solid transparent}
.s{width:343px;background:#fff;border:1px solid #c8c8c8;display:flex;align-items:center;gap:11px;padding:0 11px}.s input{border:0;outline:0;font-size:14px;flex:1;padding:0;height:24px}.s input::placeholder{color:#333;opacity:1}
.apps{display:flex;gap:1px;margin-left:4px}.apps ui-icon{width:22px;height:22px}.apps .run{border-image:linear-gradient(90deg,transparent 8%,#0a2f78 8%,#0a2f78 92%,transparent 92%) 1}.apps .act{background:#eef1f2;border-color:#0a2f78}
.tray{margin-left:auto;display:flex;align-items:center;padding-right:4px;color:#111}.tray>*{margin-right:10px}.tray .ime{font-size:14px}.tray time{text-align:center;width:64px;margin:0 24px 0 0}.tray .end{border-right:1px solid #b4b6ac;height:40px;margin:0 0 0 10px}`,
`<button aria-label="开始">${ic('win')}</button><label class="s">${ic('tsearch')}<input aria-label="搜索" placeholder="在这里输入你要搜索的内容"></label><button aria-label="Cortana">${ic('ring')}</button><button aria-label="任务视图">${ic('tview')}</button>
<div class="apps"><button aria-label="资源管理器">${ic('folder')}</button><button class="run" aria-label="Edge">${ic('edgeb')}</button><button class="run" aria-label="WPS">${ic('wps')}</button><button class="run" aria-label="CAD">${ic('cadapp')}</button><button class="act" aria-label="GTJ">${ic('tapp')}</button><button class="run" aria-label="帮助">${ic('help')}</button></div>
<div class="tray">${ic('chev')}${ic('wifi')}${ic('vol')}${ic('pen')}<span class="ime">英</span><time>16:23<br>2022/3/22</time>${ic('note')}<i class="end"></i></div>`);

define('gtj-app', `:host{display:flex;flex-direction:column;height:100vh}
main{flex:1;min-height:0;display:grid;grid-template-columns:210px 284px 4px minmax(0,1fr) 4px 286px;grid-template-rows:minmax(0,1fr)}
.mid{display:flex;flex-direction:column;gap:4px;min-height:0;padding-left:4px}`,
`<app-header></app-header><ribbon-bar></ribbon-bar><context-bar></context-bar>
<main><nav-panel></nav-panel><div class="mid"><component-panel></component-panel><property-panel></property-panel></div><side-splitter side="left"></side-splitter><plan-canvas></plan-canvas><side-splitter side="right"></side-splitter><display-panel></display-panel></main>
<status-bar></status-bar><task-bar></task-bar>`);
</script>
</body>
</html>
